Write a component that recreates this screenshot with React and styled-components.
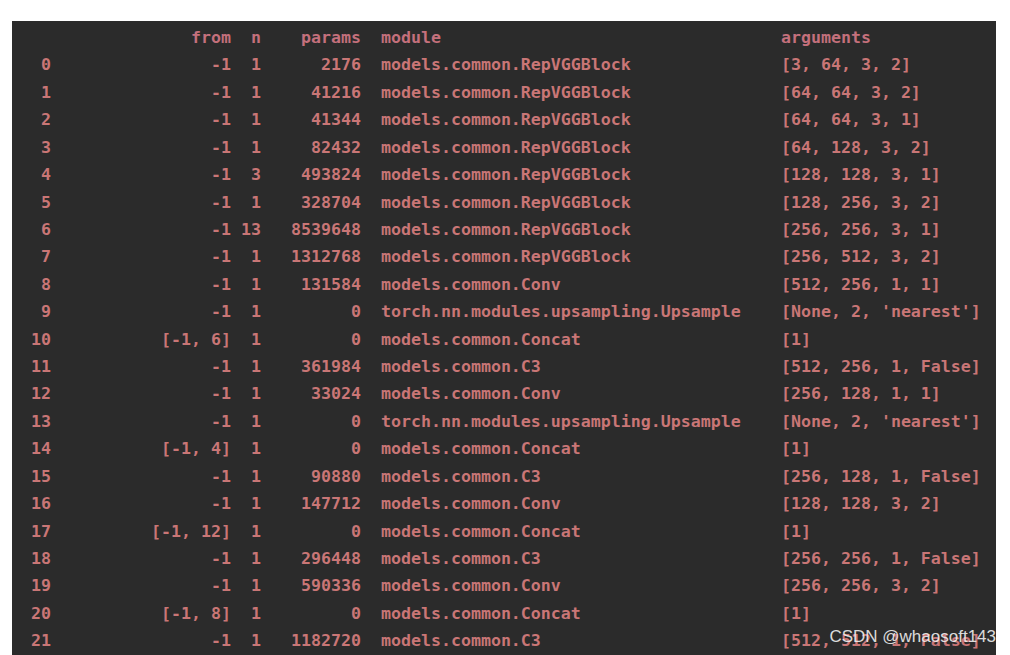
import React from "react";
import styled, { createGlobalStyle } from "styled-components";

const Global = createGlobalStyle`
  html, body { margin: 0; padding: 0; background: #ffffff; }
  body { overflow: hidden; }
`;

const Page = styled.div`
  padding: 21px 0 0 12px;
  height: 655px;
  box-sizing: border-box;
`;

const Terminal = styled.div`
  position: relative;
  width: 984px;
  height: 634px;
  overflow: hidden;
  background: #2b2b2b;
  box-sizing: border-box;
  padding: 3px 0 0 9px;
  font-family: "DejaVu Sans Mono", "Liberation Mono", monospace;
  font-size: 16.6px;
  font-weight: 700;
  color: #c97676;
`;

const Row = styled.div`
  display: grid;
  grid-template-columns: 30px 180px 30px 100px 420px 1fr;
  height: 27.43px;
  line-height: 27.43px;
  white-space: pre;
  color: ${(p) => (p.$header ? "#c4707c" : "#c97676")};
`;

const Cell = styled.span`
  text-align: ${(p) => (p.$right ? "right" : "left")};
  padding-left: ${(p) => (p.$indent ? "20px" : "0")};
`;

const Watermark = styled.div`
  position: absolute;
  right: 0;
  bottom: 8px;
  font-family: "Liberation Sans", Arial, sans-serif;
  font-size: 17px;
  font-weight: 400;
  line-height: 20px;
  color: rgba(238, 238, 238, 0.92);
  white-space: nowrap;
`;

const rows = [
  ["0", "-1", "1", "2176", "models.common.RepVGGBlock", "[3, 64, 3, 2]"],
  ["1", "-1", "1", "41216", "models.common.RepVGGBlock", "[64, 64, 3, 2]"],
  ["2", "-1", "1", "41344", "models.common.RepVGGBlock", "[64, 64, 3, 1]"],
  ["3", "-1", "1", "82432", "models.common.RepVGGBlock", "[64, 128, 3, 2]"],
  ["4", "-1", "3", "493824", "models.common.RepVGGBlock", "[128, 128, 3, 1]"],
  ["5", "-1", "1", "328704", "models.common.RepVGGBlock", "[128, 256, 3, 2]"],
  ["6", "-1", "13", "8539648", "models.common.RepVGGBlock", "[256, 256, 3, 1]"],
  ["7", "-1", "1", "1312768", "models.common.RepVGGBlock", "[256, 512, 3, 2]"],
  ["8", "-1", "1", "131584", "models.common.Conv", "[512, 256, 1, 1]"],
  ["9", "-1", "1", "0", "torch.nn.modules.upsampling.Upsample", "[None, 2, 'nearest']"],
  ["10", "[-1, 6]", "1", "0", "models.common.Concat", "[1]"],
  ["11", "-1", "1", "361984", "models.common.C3", "[512, 256, 1, False]"],
  ["12", "-1", "1", "33024", "models.common.Conv", "[256, 128, 1, 1]"],
  ["13", "-1", "1", "0", "torch.nn.modules.upsampling.Upsample", "[None, 2, 'nearest']"],
  ["14", "[-1, 4]", "1", "0", "models.common.Concat", "[1]"],
  ["15", "-1", "1", "90880", "models.common.C3", "[256, 128, 1, False]"],
  ["16", "-1", "1", "147712", "models.common.Conv", "[128, 128, 3, 2]"],
  ["17", "[-1, 12]", "1", "0", "models.common.Concat", "[1]"],
  ["18", "-1", "1", "296448", "models.common.C3", "[256, 256, 1, False]"],
  ["19", "-1", "1", "590336", "models.common.Conv", "[256, 256, 3, 2]"],
  ["20", "[-1, 8]", "1", "0", "models.common.Concat", "[1]"],
  ["21", "-1", "1", "1182720", "models.common.C3", "[512, 512, 1, False]"],
];

function Line({ cells, header }) {
  const [i, f, n, p, m, a] = cells;
  return (
    <Row $header={header}>
      <Cell $right>{i}</Cell>
      <Cell $right>{f}</Cell>
      <Cell $right>{n}</Cell>
      <Cell $right>{p}</Cell>
      <Cell $indent>{m}</Cell>
      <Cell>{a}</Cell>
    </Row>
  );
}

export default function App() {
  return (
    <Page>
      <Global />
      <Terminal>
        <Line header cells={["", "from", "n", "params", "module", "arguments"]} />
        {rows.map((r) => (
          <Line key={r[0]} cells={r} />
        ))}
        <Watermark>CSDN @whaosoft143</Watermark>
      </Terminal>
    </Page>
  );
}
